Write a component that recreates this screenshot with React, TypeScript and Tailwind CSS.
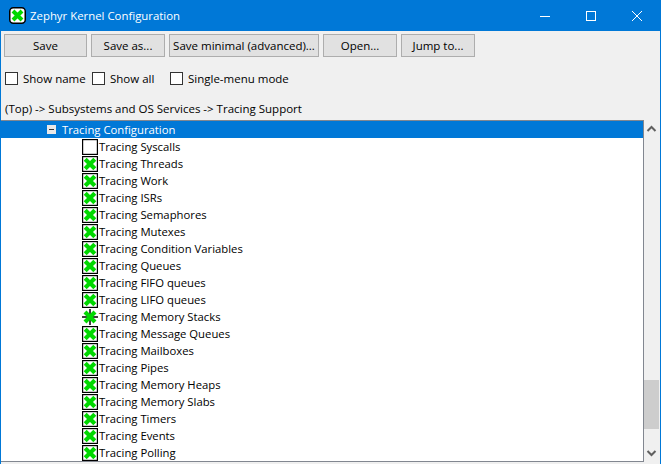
const FONT = "font-['Open_Sans','Noto_Sans',sans-serif]";

type State = "on" | "off" | "mid";

const rows: { label: string; state: State }[] = [
  { label: "Tracing Syscalls", state: "off" },
  { label: "Tracing Threads", state: "on" },
  { label: "Tracing Work", state: "on" },
  { label: "Tracing ISRs", state: "on" },
  { label: "Tracing Semaphores", state: "on" },
  { label: "Tracing Mutexes", state: "on" },
  { label: "Tracing Condition Variables", state: "on" },
  { label: "Tracing Queues", state: "on" },
  { label: "Tracing FIFO queues", state: "on" },
  { label: "Tracing LIFO queues", state: "on" },
  { label: "Tracing Memory Stacks", state: "mid" },
  { label: "Tracing Message Queues", state: "on" },
  { label: "Tracing Mailboxes", state: "on" },
  { label: "Tracing Pipes", state: "on" },
  { label: "Tracing Memory Heaps", state: "on" },
  { label: "Tracing Memory Slabs", state: "on" },
  { label: "Tracing Timers", state: "on" },
  { label: "Tracing Events", state: "on" },
  { label: "Tracing Polling", state: "on" },
];

function StateIcon({ state }: { state: State }) {
  if (state === "mid") {
    return (
      <svg width="16" height="16" viewBox="0 0 16 16" className="shrink-0">
        <path d="M8 0V16M0 8H16" stroke="#000" strokeWidth="1.5" />
        <path d="M3 3 13 13M13 3 3 13" stroke="#00d800" strokeWidth="4.2" />
        <rect x="5" y="5" width="6" height="6" fill="#00d800" />
      </svg>
    );
  }
  return (
    <svg width="16" height="16" viewBox="0 0 16 16" className="shrink-0">
      <rect x="0.6" y="0.6" width="14.8" height="14.8" fill="#fff" stroke="#000" strokeWidth="1.2" />
      {state === "on" && <path d="M3.2 3.2 12.8 12.8M12.8 3.2 3.2 12.8" stroke="#00d800" strokeWidth="4.2" />}
    </svg>
  );
}

function Btn({ label, className }: { label: string; className: string }) {
  return (
    <button className={`h-[23px] border border-[#adadad] bg-[#e1e1e1] text-[11.5px] leading-none whitespace-nowrap text-black ${className}`}>
      {label}
    </button>
  );
}

function Check({ label, className }: { label: string; className: string }) {
  return (
    <label className={`flex items-center ${className}`}>
      <span className="h-[13px] w-[13px] shrink-0 border border-[#333] bg-white" />
      <span className="ml-[5px] text-[11.5px] leading-none whitespace-nowrap text-black">{label}</span>
    </label>
  );
}

export default function App() {
  return (
    <div className={`${FONT} flex h-[464px] w-[661px] flex-col overflow-hidden border-x border-[#0078d7] bg-[#f0f0f0]`}>
      <div className="flex h-[31px] shrink-0 items-center bg-[#0078d7] pl-[8px] text-white">
        <svg width="17" height="17" viewBox="0 0 17 17" className="shrink-0">
          <rect x="0.75" y="0.75" width="15.5" height="15.5" rx="3.5" fill="#fff" stroke="#000" strokeWidth="1.5" />
          <path d="M4 4 13 13M13 4 4 13" stroke="#00d800" strokeWidth="4" />
        </svg>
        <span className="ml-[4px] text-[11.4px]">Zephyr Kernel Configuration</span>
        <div className="ml-auto flex items-center">
          <svg width="46" height="30" viewBox="0 0 46 30"><path d="M18 15.5H28" stroke="#fff" /></svg>
          <svg width="46" height="30" viewBox="0 0 46 30"><rect x="18.5" y="10.5" width="9" height="9" fill="none" stroke="#fff" /></svg>
          <svg width="46" height="30" viewBox="0 0 46 30"><path d="M18 10 28 20M28 10 18 20" stroke="#fff" /></svg>
        </div>
      </div>
      <div className="mt-[3px] flex gap-[4px] pl-[3px]">
        <Btn label="Save" className="w-[83px]" />
        <Btn label="Save as..." className="w-[74px]" />
        <Btn label="Save minimal (advanced)..." className="w-[150px]" />
        <Btn label="Open..." className="w-[74px]" />
        <Btn label="Jump to..." className="w-[74px]" />
      </div>
      <div className="mt-[15px] flex h-[13px] pl-[4px]">
        <Check label="Show name" className="w-[87px]" />
        <Check label="Show all" className="w-[78px]" />
        <Check label="Single-menu mode" className="w-[140px]" />
      </div>
      <div className="mt-[17px] h-[14px] pl-[4px] text-[11.5px] leading-[14px] text-black">
        (Top) -&gt; Subsystems and OS Services -&gt; Tracing Support
      </div>
      <div className="mt-[4px] flex">
        <div className="h-[342px] w-[643px] overflow-hidden border-y border-r border-[#828790] bg-white">
          <div className="flex h-[17px] items-center bg-[#0078d7] pl-[46px] text-white">
            <span className="flex h-[9px] w-[9px] items-center justify-center bg-[#e8e8e8]">
              <span className="h-px w-[5px] bg-[#333]" />
            </span>
            <span className="ml-[6px] text-[11.3px] leading-none">Tracing Configuration</span>
          </div>
          {rows.map((r) => (
            <div key={r.label} className="flex h-[17px] items-center pl-[81px]">
              <StateIcon state={r.state} />
              <span className="ml-px text-[11.3px] leading-none whitespace-nowrap text-black">{r.label}</span>
            </div>
          ))}
        </div>
        <div className="flex h-[342px] w-[16px] flex-col items-start">
          <svg width="16" height="17" viewBox="0 0 16 17" className="shrink-0">
            <path d="M3.5 11 7.5 7 11.5 11" fill="none" stroke="#606060" strokeWidth="2" />
          </svg>
          <div className="mt-[243px] h-[49px] w-[15px] bg-[#cdcdcd]" />
          <svg width="16" height="17" viewBox="0 0 16 17" className="mt-auto shrink-0">
            <path d="M3.5 6 7.5 10 11.5 6" fill="none" stroke="#606060" strokeWidth="2" />
          </svg>
        </div>
      </div>
    </div>
  );
}
